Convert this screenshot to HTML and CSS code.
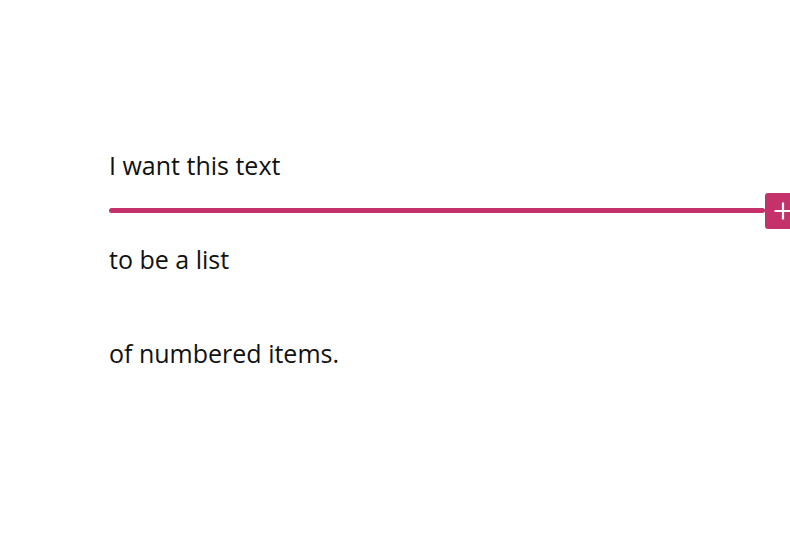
FILE: index.html
```html
<!DOCTYPE html>
<html lang="en">
  <head>
    <meta charset="UTF-8" />
    <meta name="viewport" content="width=device-width, initial-scale=1.0" />
    <title>Editor</title>
    <link rel="stylesheet" href="styles.css">
  </head>
  <body>
    <div class="editor">
      <div class="block-list">
        <p class="block">I want this text</p>

        <!-- Inserter between blocks -->
        <div class="inserter">
          <span class="inserter-line"></span>
          <button type="button" class="inserter-btn" aria-label="Add block">
            <svg width="24" height="24" viewBox="0 0 24 24">
              <path d="M12 3.5v17M3.5 12h17" stroke="#fff" stroke-width="2.2" fill="none" />
            </svg>
          </button>
        </div>

        <p class="block">to be a list</p>
        <p class="block">of numbered items.</p>
      </div>
    </div>
  </body>
</html>
```

FILE: styles.css
```css
* {
  margin: 0;
  padding: 0;
  box-sizing: border-box;
}

body {
  font-family: "Open Sans", "Noto Sans", sans-serif;
  background-color: #fff;
  color: #111;
  overflow: hidden;
  width: 790px;
  height: 538px;
}

.editor {
  padding: 147px 0 0 109px;
}

.block-list {
  position: relative;
  width: 692px;
}

.block {
  font-size: 25px;
  line-height: 36px;
  margin-bottom: 58px;
}

/* Inserter Styling */
.inserter {
  position: absolute;
  top: 46px;
  left: 0;
  right: 0;
  height: 36px;
  display: flex;
  align-items: center;
}

.inserter-line {
  flex: 1;
  height: 5px;
  margin-top: -1px;
  border-radius: 3px;
  background-color: #c5316a;
}

.inserter-btn {
  width: 36px;
  height: 36px;
  background-color: #c5316a;
  border: none;
  border-radius: 3px;
  display: flex;
  align-items: center;
  justify-content: center;
  cursor: pointer;
}
```
